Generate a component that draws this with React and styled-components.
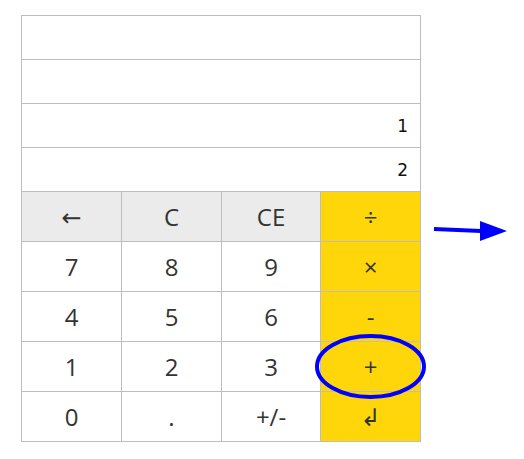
import React from "react";
import styled, { createGlobalStyle } from "styled-components";

const Global = createGlobalStyle`
  html, body { margin: 0; padding: 0; background: #fff; }
  body { font-family: "Open Sans", sans-serif; }
`;

const Page = styled.div`
  position: relative;
  width: 524px;
  height: 459px;
  padding: 15px 0 0 21px;
  box-sizing: border-box;
`;

const Calc = styled.div`
  width: 400px;
  box-sizing: border-box;
  border-top: 1px solid #bdbdbd;
  border-left: 1px solid #bdbdbd;
`;

const DisplayRow = styled.div`
  height: 43px;
  border-bottom: 1px solid #bdbdbd;
  border-right: 1px solid #bdbdbd;
  display: flex;
  align-items: center;
  justify-content: flex-end;
  padding-right: 12px;
  font-family: "DejaVu Sans", sans-serif;
  font-size: 17px;
  color: #111;
`;

const Keys = styled.div`
  display: grid;
  grid-template-columns: 100px 100px 99px 100px;
  grid-auto-rows: 50px;
`;

const Key = styled.div`
  display: flex;
  align-items: center;
  justify-content: center;
  box-sizing: border-box;
  border-right: 1px solid #bdbdbd;
  border-bottom: 1px solid #bdbdbd;
  background: ${(p) =>
    p.$kind === "op" ? "#ffd60a" : p.$kind === "fn" ? "#ebebeb" : "#ffffff"};
  font-family: "Open Sans", "DejaVu Sans", sans-serif;
  font-size: 24px;
  color: #333;
`;

const Overlay = styled.svg`
  position: absolute;
  left: 0;
  top: 0;
  pointer-events: none;
`;

const keys = [
  ["←", "fn"], ["C", "fn"], ["CE", "fn"], ["÷", "op"],
  ["7"], ["8"], ["9"], ["×", "op"],
  ["4"], ["5"], ["6"], ["-", "op"],
  ["1"], ["2"], ["3"], ["+", "op"],
  ["0"], ["."], ["+/-"], ["↲", "op"],
];

export default function App() {
  return (
    <>
      <Global />
      <Page>
        <Calc>
          <DisplayRow />
          <DisplayRow />
          <DisplayRow>1</DisplayRow>
          <DisplayRow>2</DisplayRow>
          <Keys>
            {keys.map(([label, kind], i) => (
              <Key key={i} $kind={kind}>
                {label}
              </Key>
            ))}
          </Keys>
        </Calc>
        <Overlay width="524" height="459" viewBox="0 0 524 459">
          <path d="M434 229 L481 231" stroke="#0000ff" strokeWidth="4" fill="none" />
          <polygon points="480,221 507,231 480,241" fill="#0000ff" />
          <ellipse cx="370.5" cy="366.5" rx="53.5" ry="30.5" stroke="#0000ff" strokeWidth="4" fill="none" />
        </Overlay>
      </Page>
    </>
  );
}
